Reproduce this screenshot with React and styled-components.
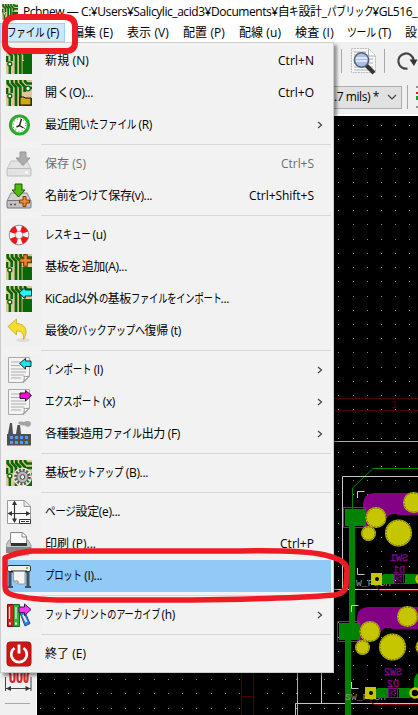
import React, { useLayoutEffect, useRef, useState } from 'react';
import styled, { createGlobalStyle, css } from 'styled-components';

const Global = createGlobalStyle`
  * { box-sizing: border-box; }
  body { margin: 0; overflow: hidden; background: #f0f0f0; }
  svg { display: block; flex: none; }
`;

const Window = styled.div`
  position: relative;
  width: 418px;
  height: 715px;
  overflow: hidden;
  display: flex;
  flex-direction: column;
  background: #f0f0f0;
  color: #000;
  font: 12px/16px "Open Sans", "Noto Sans CJK JP", sans-serif;
`;
const TitleBar = styled.header`
  height: 23px;
  flex: none;
  display: flex;
  align-items: center;
  gap: 5px;
  padding: 0 0 0 2px;
  background: #fff;
`;
const MenuBar = styled.nav`
  height: 19px;
  flex: none;
  display: flex;
  background: #fff;
`;
const MenuBarItem = styled.div`
  flex: none;
  width: ${p => p.$width}px;
  height: 19px;
  padding: 2px 0 0 7px;
  ${p => p.$open && css`background: #cce8ff; box-shadow: inset 0 0 0 1px #99d1ff;`}
`;
const ToolBar = styled.div`
  height: ${p => p.$height}px;
  flex: none;
  display: flex;
  align-items: center;
  justify-content: flex-end;
`;
const Divider = styled.div`
  width: 1px;
  height: 24px;
  background: #a7a7a7;
  margin: 0 ${p => p.$right}px 0 ${p => p.$left || 0}px;
`;
const Combo = styled.div`
  width: 132px;
  height: 23px;
  margin-right: 5px;
  padding: 0 3px 0 0;
  display: flex;
  justify-content: flex-end;
  align-items: center;
  gap: 7px;
  border: 1px solid #adadad;
  background: #e1e1e1;
`;
const Body = styled.main`
  flex: 1;
  min-height: 0;
  display: flex;
  border-top: 2px solid #fff;
`;
const SideBar = styled.aside`
  width: 37px;
  height: 599px;
  padding: 0 0 11px 5px;
  display: flex;
  flex-direction: column;
  justify-content: flex-end;
  gap: 7px;
  border-right: 1px solid #fff;
`;
const SideRule = styled.div`
  width: 25px;
  height: 1px;
  background: #a7a7a7;
`;
const Menu = styled.div`
  position: absolute;
  left: 0;
  top: 42px;
  width: 334px;
  height: 631px;
  padding: 2px;
  border: 1px solid #ccc;
  background: #f2f2f2;
  box-shadow: 3px 3px 3px rgba(0, 0, 0, .4);
`;
const MenuRow = styled.div`
  height: 32px;
  display: flex;
  align-items: center;
  padding-right: 17px;
  background: ${p => (p.$active ? '#91c9f7' : 'transparent')};
  color: ${p => (p.$disabled ? '#6d6d6d' : '#000')};
`;
const IconCell = styled.div`
  width: 38px;
  height: 32px;
  flex: none;
  display: flex;
  align-items: center;
  padding-left: 3px;
  background: ${p => (p.$active ? 'transparent' : '#f0f0f0')};
`;
const RowText = styled.div`
  flex: 1;
  padding: 0 0 0 4px;
`;
const Arrow = styled.div`
  margin-right: -9px;
`;
const Separator = styled.div`
  height: 1px;
  margin: 3px 0 3px 38px;
  background: #d7d7d7;
`;
const Line = styled.span`
  display: inline-block;
  white-space: pre;
  vertical-align: top;
`;
const Kana = styled.span`
  display: inline-block;
  transform-origin: left;
`;
const Marks = styled.svg`
  position: absolute;
  left: 0;
  top: 0;
  pointer-events: none;
`;

const KANA = /([\u3041-\u30ff]+)/;
const TRACKING = -0.35;

/* Condenses the kana of a label to a set width; without kana, or when
   `even` is set, the whole label is tracked instead. */
function Label({ children, width, even }) {
  const ref = useRef(null);
  const [fit, setFit] = useState({ k: 1, ls: 0 });
  const runs = children.split(KANA).filter(Boolean);
  const kana = runs.filter(r => KANA.test(r)).join('').length;
  useLayoutEffect(() => {
    const extra = ref.current.getBoundingClientRect().width - width;
    if (even) {
      const k = 0.8;
      setFit({ k, ls: -(extra - kana * 12 * (1 - k)) / children.length });
    } else if (kana > 0) {
      const rest = extra + TRACKING * children.length;
      setFit({ k: 1 - rest / (kana * 12), ls: TRACKING });
    } else {
      setFit({ k: 1, ls: -extra / children.length });
    }
  }, []);
  return (
    <Line ref={ref} style={{ letterSpacing: fit.ls }}>
      {runs.map((r, i) => KANA.test(r)
        ? <Kana key={i} style={{ transform: `scaleX(${fit.k})`, marginRight: -(1 - fit.k) * r.length * 12 }}>{r}</Kana>
        : r)}
    </Line>
  );
}

const Board = ({ children, size = 26 }) => (
  <svg width={size} height={size} viewBox="0 0 26 26">
    <path fill="#dfc69a" d="M0 0h26v26H0z" />
    <g fill="none" stroke="#086808" strokeWidth="2.700">
      <path d="M1.700 0v3.500l4 4V13M6 0v3l4 4v19M10.300 0v3l4 4v19M14.600 0v2.500l4 4V12" />
      <path d="M19 0v1.500l2 2h5M1 8v6M19 8h7" />
    </g>
    <path fill="#086808" d="M16.500 13H26v13h-9.500z" />
    <path d="M3.800 17v9" stroke="#086808" strokeWidth="2.400" />
    <circle cx="3.800" cy="16" r="2" fill="#fff" stroke="#086808" strokeWidth="1.300" />
    {children}
  </svg>
);
const BoardNew = () => <Board><path fill="#086808" d="M18 5h8v9h-8z" /></Board>;
const BoardOpen = () => (
  <Board>
    <path fill="#dfc69a" d="M16 12h10v6H16z" />
    <circle cx="22" cy="8.500" r="2.300" fill="#fff" stroke="#086808" strokeWidth="1.300" />
    <path d="M14 17h4l1 1h6v7H14z" fill="#d2a90c" stroke="#111" />
  </Board>
);
const Plus = ({ x, y, s = 1 }) => (
  <path transform={`translate(${x} ${y}) scale(${s})`} d="M-1.500-5h3v3.500H5v3H1.500V5h-3V1.500H-5v-3h3.500z" fill="#f6862a" stroke="#6f3509" strokeWidth=".9" />
);
const BoardAdd = () => <Board><Plus x={19.5} y={6.5} s={1.15} /></Board>;
const BoardImport = () => (
  <Board><path d="M13 7l6-5.500v2.500h6.500v6H19v2.500z" fill="#24f5f6" stroke="#08262c" strokeWidth=".9" /></Board>
);
const BoardSetup = () => (
  <Board>
    <circle cx="16.500" cy="17" r="7" fill="none" stroke="#efe9dc" strokeWidth="5" />
    <circle cx="16.500" cy="17" r="6.800" fill="none" stroke="#555" strokeWidth="3" strokeDasharray="2 1.560" />
    <circle cx="16.500" cy="17" r="5.600" fill="#b9b9b9" stroke="#666" />
    <circle cx="16.500" cy="17" r="2.300" fill="#eee" stroke="#444" />
  </Board>
);
const Clock = () => (
  <svg width="26" height="26" viewBox="0 0 26 26">
    <circle cx="13.500" cy="13" r="9" fill="#fff" stroke="#29ad29" strokeWidth="3.200" />
    <circle cx="13.500" cy="13" r="6.300" fill="none" stroke="#777" strokeWidth="1.200" strokeDasharray=".8 2.500" />
    <path d="M15.500 7l-2 6.500 4 2.500M13.500 13.500L10.500 15" stroke="#222" strokeWidth="1.400" fill="none" />
  </svg>
);
const Drive = ({ disabled }) => (
  <svg width="26" height="26" viewBox="0 0 26 26">
    <path d="M5 10h16l4 8H1z" fill={disabled ? '#e3e3e3' : '#d2d2d2'} stroke={disabled ? '#c4c4c4' : '#888'} />
    <rect x="1" y="17.500" width="24" height="7.500" rx="1" fill={disabled ? '#e3e3e3' : '#c2c2c2'} stroke={disabled ? '#bdbdbd' : '#777'} />
    {disabled
      ? <path d="M14 1h6v6h4l-7 7.500L10 7h4z" fill="#adadad" stroke="#969696" />
      : <path d="M9 1h7v6h3l-6.500 7L6 7h3z" fill="#50bd0b" stroke="#225008" />}
    <path d="M4 21.500h2M8 21.500h2" stroke={disabled ? '#ddd' : '#555'} strokeWidth="1.500" />
    {disabled ? <path d="M19 21.500h3" stroke="#fff" strokeWidth="2" /> : <Plus x={18.500} y={18.500} />}
  </svg>
);
const DriveOff = () => <Drive disabled />;
const Rescue = () => (
  <svg width="26" height="26" viewBox="0 0 26 26">
    <circle cx="13" cy="13" r="6.800" fill="none" stroke="#fafafa" strokeWidth="6" />
    <circle cx="13" cy="13" r="6.800" fill="none" stroke="#f01414" strokeWidth="6" strokeDasharray="5.900 4.781" strokeDashoffset="-2" />
    <circle cx="13" cy="13" r="9.800" fill="none" stroke="#8c5555" strokeWidth=".7" />
    <circle cx="13" cy="13" r="3.900" fill="none" stroke="#aa7777" strokeWidth=".7" />
  </svg>
);
const Undo = () => (
  <svg width="26" height="26" viewBox="0 0 26 26">
    <ellipse cx="17" cy="22" rx="7" ry="2" fill="#dedede" />
    <path d="M2 8.500L10.500 1v4.500C19 5.500 23 13 17.500 21.500c.5-6-1.500-8.500-7-8.500v4z" fill="#f5dc30" stroke="#cdb42e" />
  </svg>
);
const Sheet = ({ children }) => (
  <svg width="26" height="26" viewBox="0 0 26 26">
    <path d="M2.500.5h21v18.500L18 25.500H2.500z" fill="#f3f3f3" stroke="#a9a9a9" />
    <path d="M5 5h9M5 8.500h9M5 12h15M5 15h15M5 18h13M5 21h10" stroke="#aeaeae" />
    <path d="M17 25c1.500-2 1.500-4 1-6 2 1 4 .5 5.500 0z" fill="#fff" stroke="#999" />
    {children}
  </svg>
);
const Import = () => <Sheet><path d="M13.500 6.500l6-5v2.500h5.500v5.500h-5.500V12z" fill="#19e5e6" stroke="#142d30" /></Sheet>;
const Export = () => <Sheet><path d="M25.500 6.500l-6-5v2.500H14v5.500h5.500V12z" fill="#f20cda" stroke="#331230" /></Sheet>;
const Factory = () => (
  <svg width="26" height="26" viewBox="0 0 26 26">
    <path d="M1 24.500V13h1L4 2h2l1 11h3l1.500-9h2.500l1 9h10v11.500z" fill="#505050" />
    <path d="M12 2c2-3 6 0 7-1.500 2-1 6-.5 6 2 0 4-4 4-6 2-2 0-5 0-7-2.500" fill="#a3a3a3" />
    <path d="M4 16.500h18M4 21.500h18" stroke="#5497f5" strokeWidth="3" strokeDasharray="3 2" />
  </svg>
);
const PageSetup = () => (
  <svg width="26" height="26" viewBox="0 0 26 26">
    <path d="M1.500 1.500h17L24.500 7v17.500h-23z" fill="#fafafa" stroke="#999" />
    <path d="M18 1.500V7.500h6" fill="#e6e6e6" stroke="#999" />
    <path d="M8.500 2.500v20M2.500 14.500h21" stroke="#333" strokeWidth="1.200" />
    <path d="M8.500 1.500L6 6h5zM8.500 24L6 19.500h5zM1.500 14.500L6 12v5zM24.500 14.500L20 12v5z" fill="#333" />
    <path d="M13.500 20.500h11v4h-11zM15 22.500h4m1 0h3" fill="#fff" stroke="#333" />
  </svg>
);
const Printer = () => (
  <svg width="26" height="26" viewBox="0 0 26 26">
    <path d="M0 14l3-5h19l3 5v7H0z" fill="#c6c6c6" stroke="#999" />
    <path d="M4.500 13V1.500h12L20.500 5v8z" fill="#fafafa" stroke="#888" />
    <path d="M16 1.500V6h4" fill="none" stroke="#888" />
    <path d="M5 12h16v3H5z" fill="#333" />
    <path d="M0 16h25v6H0z" fill="#888" /><path d="M3 22h20v3H3z" fill="#ccc" />
  </svg>
);
const Plotter = () => (
  <svg width="26" height="26" viewBox="0 0 26 26">
    <path d="M4 7v17M22 7v17" stroke="#45505a" strokeWidth="3" /><path d="M1 24h6M19 24h6" stroke="#45505a" strokeWidth="2" />
    <rect x="1.500" y="2.500" width="23" height="6" rx="1.500" fill="#f1f2ec" stroke="#333" />
    <path d="M5 8.500h16" stroke="#222" strokeWidth="2" /><path d="M20 5h2" stroke="#4dce35" strokeWidth="2" />
    <path d="M7.500 8.500h11.500V21h-7l-4.500-3z" fill="#f3f3f3" stroke="#999" /><path d="M7.500 18h4.500v3" fill="#ccc" stroke="#888" />
  </svg>
);
const Archive = () => (
  <svg width="26" height="26" viewBox="0 0 26 26">
    <path d="M1.500 2.500h6v22h-6z" fill="#d32023" stroke="#741010" />
    <path d="M7.500 2.500h6v22h-6z" fill="#2bb53a" stroke="#146a1e" />
    <path d="M14 11l4.500-2 5.500 12.500-5 2.500z" fill="#397de2" stroke="#214b91" />
    <path d="M3.500 5v12M10 5v12" stroke="#eee" strokeWidth="1.300" /><path d="M17 13l3.500 7" stroke="#e4eefa" strokeWidth="2" />
    <path d="M3 21.500h2M9 21.500h2" stroke="#fff" strokeWidth="2" />
    <path d="M25 7.500L18.500 2v3H13v5.500h5.500v3z" fill="#f33cf3" stroke="#461346" />
  </svg>
);
const Power = () => (
  <svg width="26" height="26" viewBox="0 0 26 26">
    <rect x="1" y="1" width="24" height="24" rx="3" fill="#cd1717" stroke="#ad1010" />
    <path d="M8.500 7a7.800 7.800 0 1 0 9 0" fill="none" stroke="#fff" strokeWidth="2.700" /><path d="M13 3.500v9" stroke="#fff" strokeWidth="2.800" />
  </svg>
);
const Chevron = ({ down }) => (
  <svg width={down ? 12 : 6} height="8" viewBox={down ? '0 0 12 8' : '0 0 6 8'}>
    <path d={down ? 'M2 2l4 4 4-4' : 'M1 1l3.500 3L1 7'} fill="none" stroke="#444" strokeWidth="1.200" />
  </svg>
);
const Find = () => (
  <svg width="27" height="28" viewBox="0 0 27 28">
    <path d="M1.500 1.500h17l7 7v17h-24z" fill="#f7f7f7" stroke="#bbb" strokeDasharray="2 .7" />
    <path d="M18.500 2v7h6.500M4 5h12M4 8h11M4 12h19M4 16h19M4 20h19M4 23h18" fill="none" stroke="#b0b0b0" />
    <path d="M16 18l8 8" stroke="#333" strokeWidth="4" />
    <circle cx="11.500" cy="13" r="7.200" fill="#a9bfe3" stroke="#53627d" strokeWidth="1.500" />
    <path d="M6 11h11M6 14h11" stroke="#e9f1ff" strokeWidth="1.500" />
  </svg>
);
const Redo = () => (
  <svg width="22" height="22" viewBox="0 0 22 22">
    <path d="M11.500 18.500A7.600 7.600 0 1 1 17.500 10" fill="none" stroke="#444" strokeWidth="2.200" /><path d="M13.500 9.500h8L18 16z" fill="#333" />
  </svg>
);
const TrackIcon = () => (
  <svg width="2" height="24" viewBox="0 0 2 24"><path d="M0 2h3M0 22h3" stroke="#333" /><path d="M0 8h4" stroke="#dd1d1d" strokeWidth="2" /><path d="M0 13h4" stroke="#119e22" strokeWidth="4" /></svg>
);
const TuneIcon = () => (
  <svg width="27" height="30" viewBox="0 0 27 30">
    <path d="M0 6h3q2.500 0 2.500 4v3q0 3 2 3t2-3V3M12.500 3v10q0 3 2 3t2-3V3M19.500 3v10q0 3 1.500 3t1.500-3v-3q0-4 3-4h1" fill="none" stroke="#d22b2f" strokeWidth="2.200" />
    <path d="M.5 11v14M26 11v14M1 22.500h25" stroke="#444" /><path d="M1 22.500l5-2.500v5zM25.500 22.500l-5-2.500v5z" fill="#333" />
  </svg>
);

const Pad = ({ x, y, r }) => (
  <g fill="#c6c600"><circle cx={x} cy={y} r={r} /><circle cx={x} cy={y} r={r - 1} fill="none" stroke="#343400" strokeWidth=".6" strokeDasharray="2 1" /></g>
);
const Switch = ({ x, y, sw, diode }) => (
  <g transform={`translate(${x} ${y})`}>
    <path d="M363 534v-29q0-12 12-12h50v21h-33q-4 1-8 7-6 5-12 5z" fill="#840084" />
    <path d="M397 514.500h30" stroke="#840084" />
    <path d="M357.500 498v-6.500h7M357.500 568v6.500h7" fill="none" stroke="#c8c8c8" />
    <path d="M345 509h20v17h-20z" fill="#008400" />
    <path d="M343.500 507.500h22v20h-22z" fill="none" stroke="#008400" />
    <Pad x={376} y={517.500} r={10.500} /><Pad x={368.500} y={533.500} r={7.500} />
    <Pad x={398.500} y={533} r={13.500} /><Pad x={413.500} y={502.500} r={10.500} /><Pad x={429} y={533} r={7.500} />
    <g fill="#840084" stroke="#840084" strokeWidth=".4" fontFamily="Liberation Mono" fontSize="11">
      <text transform="translate(408 560.500) scale(-1 1)" textLength="18" lengthAdjust="spacingAndGlyphs">{sw}</text>
      <text transform="translate(405 573) scale(-1 1)" textLength="12" lengthAdjust="spacingAndGlyphs">{diode}</text>
    </g>
    <text x={x ? 351 : 356} y="586" fill="#999" fontFamily="Liberation Mono" fontSize="9.500" textLength={x ? 41 : 35}>{x ? 'SW_PUSH' : 'W_PUSH'}</text>
    <path d="M377 585v3l3 2.500h50" fill="none" stroke="#840000" />
    <path d="M382 575h13v9h-13zM405 575h11v9h-11z" fill="#008400" />
    <path d="M383.500 574.500h33v9h-33z" fill="none" stroke="#008400" />
    <path d="M394.500 574.500h9v9h-9zM397 576v6M401 576l-4 3 4 3z" fill="none" stroke="#840084" />
    <path d="M371 573h11v12h-11z" fill="#c6c600" /><circle cx="377" cy="579" r="2" />
    <circle cx="421" cy="579" r="4.500" fill="none" stroke="#c6c600" strokeWidth="2.500" />
  </g>
);

const GRID_X = Array.from({ length: 27 }, (_, i) => Math.round(40 + i * 14.210));
const GRID_Y = Array.from({ length: 42 }, (_, i) => Math.round(125 + i * 14.210));
const PcbCanvas = () => (
  <svg width="381" height="599" viewBox="37 116 381 599">
    <path d="M37 116h381v599H37z" />
    <g fill="#8c8c8c">{GRID_Y.flatMap(y => GRID_X.map(x => <rect key={`${x}-${y}`} x={x} y={y} width="1" height="1" />))}</g>
    <path d="M300 398.500h118M300 410.500h118M241.500 650v65M253.500 650v65M241.500 696.500h12" stroke="#4c0000" fill="none" />
    <text x="391" y="408" fill="#580000" fontFamily="Liberation Mono" fontSize="11">1</text>
    <path d="M297.500 715V441.500H418" fill="none" stroke="#c0c000" />
    <path d="M352.500 510v-22l20.500-19.500h45" fill="none" stroke="#008400" />
    <path d="M418 476.500h-75.500v113M300 589.500h118M321.500 650v53M295.500 715v-11.500H418" fill="none" stroke="#c6c6c6" />
    <path d="M349 520h6v112h-6zM345 630h6v85h-6zM418 673q-4 3-4 8v9h4z" fill="#008400" />
    <Switch x={0} y={0} sw="SW1" diode="D1" />
    <Switch x={-6} y={114} sw="SW2" diode="D2" />
  </svg>
);

const BAR = [
  ['ファイル (F)', 52, 65], ['編集 (E)', 41, 55], ['表示 (V)', 42, 56], ['配置 (P)', 42, 56],
  ['配線 (u)', 42, 56], ['検査 (I)', 39, 52], ['ツール (T)', 44, 58], ['設', 12, 20],
];
const ROWS = [
  [BoardNew, '新規 (N)', 44, 'Ctrl+N'], [BoardOpen, '開く(O)...', 48, 'Ctrl+O'], [Clock, '最近開いたファイル (R)', 107, '>'], null,
  [DriveOff, '保存 (S)', 41, 'Ctrl+S'], [Drive, '名前をつけて保存(v)...', 107, 'Ctrl+Shift+S'], null,
  [Rescue, 'レスキュー (u)', 61], [BoardAdd, '基板を追加(A)...', 82], [BoardImport, 'KiCad以外の基板ファイルをインポート...', 184], [Undo, '最後のバックアップへ復帰 (t)', 136], null,
  [Import, 'インポート (I)', 58, '>'], [Export, 'エクスポート (x)', 70, '>'], [Factory, '各種製造用ファイル出力 (F)', 135, '>'], null,
  [BoardSetup, '基板セットアップ (B)...', 103], null,
  [PageSetup, 'ページ設定(e)...', 75], [Printer, '印刷 (P)...', 51, 'Ctrl+P'], [Plotter, 'プロット (I)...', 57], null,
  [Archive, 'フットプリントのアーカイブ (h)', 130, '>'], null,
  [Power, '終了 (E)', 41],
];
const SHORTCUT_WIDTH = { 'Ctrl+N': 36, 'Ctrl+O': 36, 'Ctrl+S': 33, 'Ctrl+P': 34, 'Ctrl+Shift+S': 65 };

export default function App() {
  return (
    <Window>
      <Global />
      <TitleBar>
        <Board size={16} />
        <Label width={394} even>Pcbnew — C:¥Users¥Salicylic_acid3¥Documents¥自キ設計_パブリック¥GL516_</Label>
      </TitleBar>
      <MenuBar>
        {BAR.map(([text, w, cell], i) => (
          <MenuBarItem key={text} $width={cell} $open={i === 0}><Label width={w}>{text}</Label></MenuBarItem>
        ))}
      </MenuBar>
      <ToolBar $height={38}>
        <Divider $right={8} /><Find /><Divider $left={7} $right={11} /><Redo />
      </ToolBar>
      <ToolBar $height={34}>
        <Combo><Label width={45}>.7 mils) *</Label><Chevron down /></Combo>
        <Divider $right={8} /><TrackIcon />
      </ToolBar>
      <Body>
        <SideBar><TuneIcon /><SideRule /></SideBar>
        <PcbCanvas />
      </Body>
      <Menu>
        {ROWS.map((row, i) => {
          if (!row) return <Separator key={i} />;
          const [Icon, text, width, extra] = row;
          const active = Icon === Plotter;
          return (
            <MenuRow key={i} $active={active} $disabled={Icon === DriveOff}>
              <IconCell $active={active}><Icon /></IconCell>
              <RowText><Label width={width}>{text}</Label></RowText>
              {extra === '>' ? <Arrow><Chevron /></Arrow> : extra && <Label width={SHORTCUT_WIDTH[extra]}>{extra}</Label>}
            </MenuRow>
          );
        })}
      </Menu>
      <Marks width="418" height="715" viewBox="0 0 418 715" fill="none" stroke="#ed1c24" strokeWidth="6" strokeLinejoin="round">
        <path d="M16 17H64Q75 17 75 27V42Q75 51 66 51H16Q5 51 5 44V28Q5 17 16 17Z" />
        <path d="M5 558Q14 553 32 551H240Q303 550 325 555Q347 560 347 570L346 586Q345 593 335 595Q285 599 190 600H57Q24 599 10 594Q5 592 5 586Z" strokeWidth="5.500" />
      </Marks>
    </Window>
  );
}
